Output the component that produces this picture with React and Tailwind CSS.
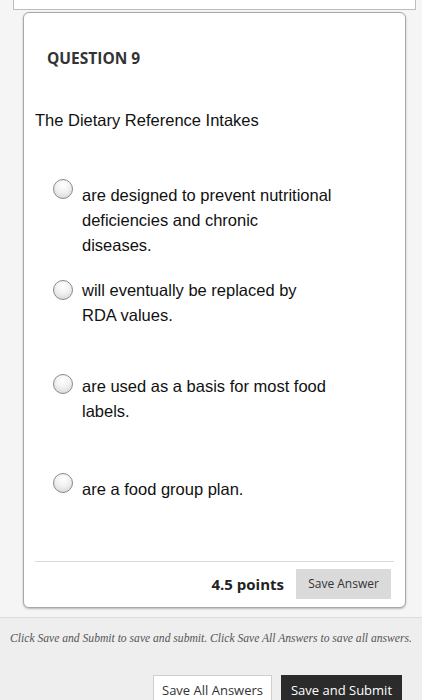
import React from "react";

const options = [
    { id: 1, lines: ["are designed to prevent nutritional", "deficiencies and chronic", "diseases."], mt: "mt-0", radioTop: "mt-[-4px]" },
    { id: 2, lines: ["will eventually be replaced by", "RDA values."], mt: "mt-[20px]", radioTop: "mt-[2px]" },
    { id: 3, lines: ["are used as a basis for most food", "labels."], mt: "mt-[46px]", radioTop: "mt-[0px]" },
    { id: 4, lines: ["are a food group plan."], mt: "mt-[53px]", radioTop: "mt-[-4px]" },
];

function Radio({ className }) {
    return (
        <span
            className={`${className} block w-[20px] h-[20px] shrink-0 rounded-full border border-[#8a8a8a] bg-[radial-gradient(circle_at_50%_30%,#ffffff_0%,#f1f1f1_45%,#cfcfcf_100%)]`}
        />
    );
}

export default function App() {
    return (
        <div className="w-[422px] h-[700px] overflow-hidden bg-[#f5f5f5] flex flex-col">
            <div className="ml-[13px] w-[403px] h-[10px] shrink-0 bg-white border-x border-b border-[#bdbdbd]" />

            <div className="ml-[23px] mt-[2px] w-[383px] h-[596px] shrink-0 rounded-[6px] border border-[#a8a8a8] bg-white shadow-[0_1px_2px_rgba(0,0,0,0.25)] flex flex-col">
                <div className="mt-[35px] pl-[23px] h-[20px] leading-[20px] text-[15.5px] font-bold text-[#333] font-['Open_Sans',sans-serif]">
                    QUESTION 9
                </div>

                <div className="mt-[40px] pl-[11px] h-[24px] leading-[24px] text-[16.5px] text-[#111] font-['Liberation_Sans',Arial,sans-serif]">
                    The Dietary Reference Intakes
                </div>

                <div className="mt-[51px] flex flex-col font-['Liberation_Sans',Arial,sans-serif] text-[16.5px] text-[#111]">
                    {options.map((opt) => (
                        <div key={opt.id} className={`${opt.mt} flex pl-[29px]`}>
                            <Radio className={opt.radioTop} />
                            <div className="ml-[9px] leading-[25px]">
                                {opt.lines.map((line, i) => (
                                    <div key={i}>{line}</div>
                                ))}
                            </div>
                        </div>
                    ))}
                </div>

                <div className="mt-auto mx-[11px] border-t border-[#d9d9d9]" />
                <div className="flex items-center justify-end pr-[14px] pt-[7px] pb-[8px] font-['Open_Sans',sans-serif]">
                    <span className="text-[15px] font-bold text-[#222] mr-[12px]">4.5 points</span>
                    <button className="w-[95px] h-[30px] bg-[#dadada] text-[12px] text-[#333]">
                        Save Answer
                    </button>
                </div>
            </div>

            <div className="mt-[9px] flex-1 border-t border-[#dcdcdc] bg-[#eeeeee] flex flex-col">
                <p className="mt-[12px] text-center whitespace-nowrap text-[11.6px] italic text-[#555] font-['Liberation_Serif',Georgia,serif]">
                    Click Save and Submit to save and submit. Click Save All Answers to save all answers.
                </p>
                <div className="mt-[28px] flex justify-end gap-[9px] pr-[20px] font-['Open_Sans',sans-serif] text-[13px]">
                    <button className="w-[119px] h-[30px] bg-white border border-[#cfcfcf] text-[#333]">
                        Save All Answers
                    </button>
                    <button className="w-[121px] h-[30px] bg-[#2b2b2b] text-white">
                        Save and Submit
                    </button>
                </div>
            </div>
        </div>
    );
}
